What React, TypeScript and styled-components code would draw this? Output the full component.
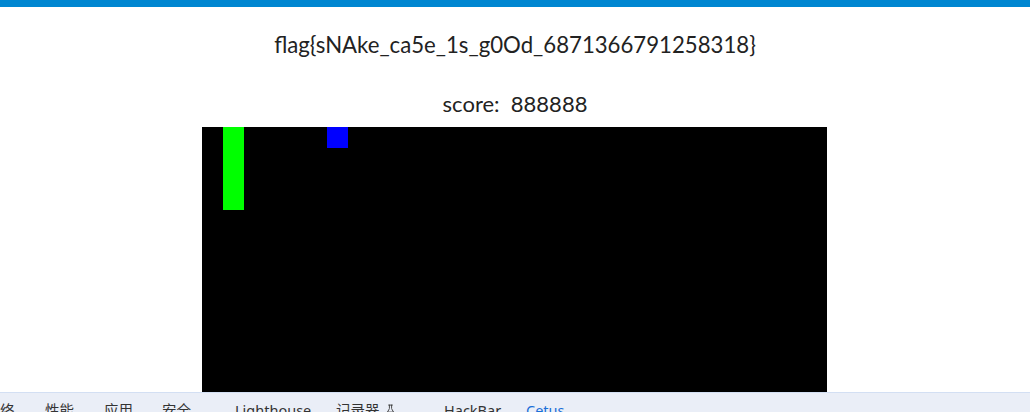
import React from "react";
import styled, { createGlobalStyle } from "styled-components";
import { FlaskConical } from "lucide-react";

const Global = createGlobalStyle`
  html, body { margin: 0; padding: 0; background: #fff; }
  body { font-family: Lato, "Noto Sans", sans-serif; overflow: hidden; }
`;

const Shell = styled.div`
  width: 1030px;
  height: 412px;
  display: flex;
  flex-direction: column;
  overflow: hidden;
`;

const Viewport = styled.div`
  flex: 1;
  min-height: 0;
  overflow: hidden;
  display: flex;
  flex-direction: column;
  align-items: center;
`;

const TopBar = styled.div`
  align-self: stretch;
  height: 7px;
  background: #0086d1;
  flex-shrink: 0;
`;

const Flag = styled.h1`
  margin: 23px 0 0;
  font-family: Lato, sans-serif;
  font-weight: 400;
  font-size: 22.2px;
  line-height: 30px;
  color: #222;
`;

const Score = styled.h2`
  margin: 30px 0 0;
  font-family: Lato, sans-serif;
  font-weight: 400;
  font-size: 22px;
  line-height: 28px;
  color: #222;
`;

const Board = styled.div`
  margin: 9px 1px 0 0;
  width: 625px;
  height: 420px;
  flex-shrink: 0;
  background: #000;
  position: relative;
`;

const Block = styled.div<{ $c: string }>`
  position: absolute;
  background: ${(p) => p.$c};
`;

const DevBar = styled.div`
  height: 19px;
  flex-shrink: 0;
  border-top: 1px solid #d3dff3;
  background: #eaeef7;
  display: flex;
  align-items: flex-start;
  overflow: hidden;
`;

const Tab = styled.div<{ $w: number; $active?: boolean }>`
  width: ${(p) => p.$w}px;
  flex-shrink: 0;
  display: flex;
  align-items: center;
  gap: 4px;
  padding-top: 8px;
  font-family: "Segoe UI", "Noto Sans", "Noto Sans CJK SC", sans-serif;
  font-size: 14.5px;
  line-height: 18px;
  white-space: nowrap;
  color: ${(p) => (p.$active ? "#1a6fd8" : "#333")};
`;

const tabs: { label: string; w: number; icon?: boolean; active?: boolean }[] = [
  { label: "络", w: 45 },
  { label: "性能", w: 59 },
  { label: "应用", w: 58 },
  { label: "安全", w: 73 },
  { label: "Lighthouse", w: 101 },
  { label: "记录器", w: 108, icon: true },
  { label: "HackBar", w: 82 },
  { label: "Cetus", w: 80, active: true },
];

export default function App() {
  return (
    <Shell>
      <Global />
      <Viewport>
        <TopBar />
        <Flag>flag{"{"}sNAke_ca5e_1s_g0Od_6871366791258318{"}"}</Flag>
        <Score>score:&nbsp; 888888</Score>
        <Board>
          <Block $c="#00ff00" style={{ left: 21, top: 0, width: 21, height: 83 }} />
          <Block $c="#0000ff" style={{ left: 125, top: 0, width: 21, height: 21 }} />
        </Board>
      </Viewport>
      <DevBar>
        {tabs.map((t) => (
          <Tab key={t.label} $w={t.w} $active={t.active}>
            {t.label}
            {t.icon && <FlaskConical size={13} strokeWidth={1.6} />}
          </Tab>
        ))}
      </DevBar>
    </Shell>
  );
}
